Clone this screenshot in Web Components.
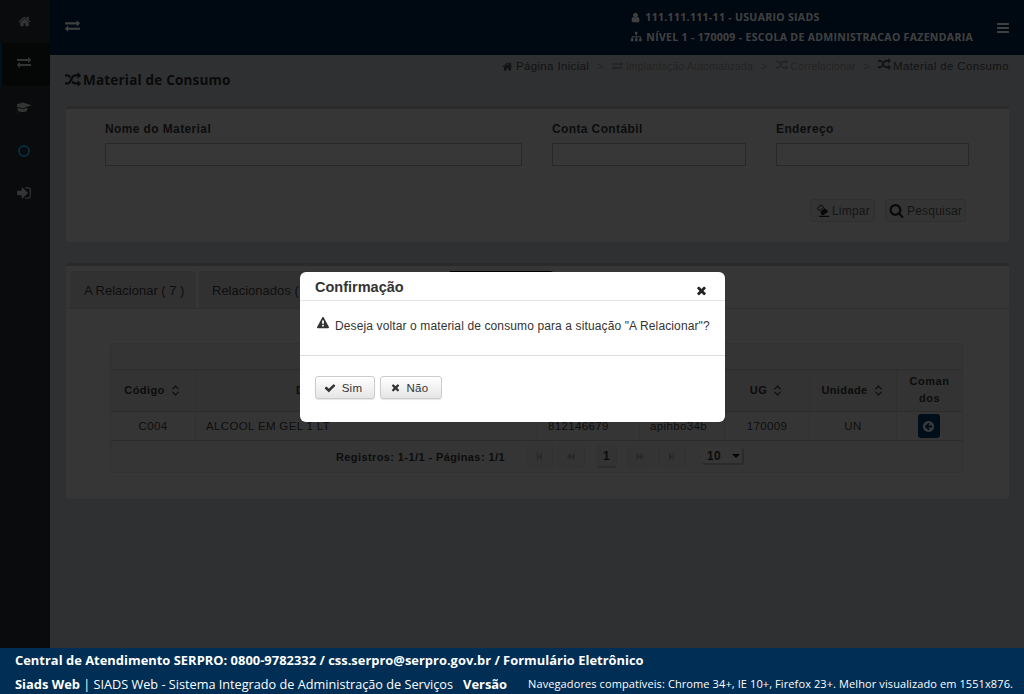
<!DOCTYPE html>
<html lang="pt-BR">
<head>
<meta charset="utf-8">
<title>Material de Consumo</title>
<style>
  html, body { margin: 0; height: 100%; overflow: hidden; }
  body { font-family: "Liberation Sans", Arial, sans-serif; background: #bcc0c4; }
  siads-app { height: 694px; }
</style>
</head>
<body>
<siads-app>
  <side-menu slot="side"></side-menu>
  <top-bar slot="top"></top-bar>
  <main-page slot="main"></main-page>
  <confirm-dialog slot="modal" heading="Confirmação">Deseja voltar o material de consumo para a situação "A Relacionar"?</confirm-dialog>
  <page-footer slot="footer"></page-footer>
</siads-app>

<script>
const ICONS = {
  home: "M1472 992v480q0 26-19 45t-45 19h-384v-384h-256v384h-384q-26 0-45-19t-19-45v-480q0-1 .5-3t.5-3l575-474 575 474q1 2 1 6zm223-69l-62 74q-8 9-21 11h-3q-13 0-21-7l-692-577-692 577q-12 8-24 7-13-2-21-11l-62-74q-8-10-7-23.5t11-21.5l719-599q32-26 76-26t76 26l244 204v-195q0-14 9-23t23-9h192q14 0 23 9t9 23v408l219 182q10 8 11 21.5t-7 23.5z",
  exchange: "M1792 1184v192q0 13-9.5 22.5t-22.5 9.5h-1376v192q0 13-9.5 22.5t-22.5 9.5q-12 0-24-10l-319-320q-9-9-9-22 0-14 9-23l320-320q9-9 23-9 13 0 22.5 9.5t9.5 22.5v192h1376q13 0 22.5 9.5t9.5 22.5zm0-544q0 14-9 23l-320 320q-9 9-23 9-13 0-22.5-9.5t-9.5-22.5v-192h-1376q-13 0-22.5-9.5t-9.5-22.5v-192q0-13 9.5-22.5t22.5-9.5h1376v-192q0-14 9-23t23-9q12 0 24 10l319 319q9 9 9 23z",
  random: "M666 481q-60 92-137 273-22-45-37-72.5t-40.5-63.5-51-56.5-63-35-81.5-14.5h-224q-14 0-23-9t-9-23v-192q0-14 9-23t23-9h224q250 0 410 225zm1126 799q0 14-9 23l-320 320q-9 9-23 9-13 0-22.5-9.5t-9.5-22.5v-192q-32 0-85 .5t-81 1-73-1-71-5-64-10.5-63-18.5-58-28.5-59-40-55-53.5-56-69.5q59-93 136-273 22 45 37 72.5t40.5 63.5 51 56.5 63 35 81.5 14.5h256v-192q0-14 9-23t23-9q12 0 24 10l319 319q9 9 9 23zm0-896q0 14-9 23l-320 320q-9 9-23 9-13 0-22.5-9.5t-9.5-22.5v-192h-256q-48 0-87 15t-69 45-51 61.5-45 77.5q-32 62-78 171-29 66-49.5 111t-54 105-64 100-74 83-90 68.5-106.5 42-128 16.5h-224q-14 0-23-9t-9-23v-192q0-14 9-23t23-9h224q48 0 87-15t69-45 51-61.5 45-77.5q32-62 78-171 29-66 49.5-111t54-105 64-100 74-83 90-68.5 106.5-42 128-16.5h256v-192q0-14 9-23t23-9q12 0 24 10l319 319q9 9 9 23z",
  user: "M1536 1399q0 109-62.5 187t-150.5 78h-854q-88 0-150.5-78t-62.5-187q0-85 8.5-160.5t31.5-152 58.5-131 94-89 134.5-34.5q131 128 313 128t313-128q76 0 134.5 34.5t94 89 58.5 131 31.5 152 8.5 160.5zm-256-887q0 159-112.5 271.5t-271.5 112.5-271.5-112.5-112.5-271.5 112.5-271.5 271.5-112.5 271.5 112.5 112.5 271.5z",
  sitemap: "M700 128h392v420h-126v250h570q40 0 68 28t28 68v220h120v400h-392v-400h124v-170h-474v170h124v400h-392v-400h124v-170h-474v170h124v400h-392v-400h120v-220q0-40 28-68t68-28h570v-250h-126z",
  bars: "M1664 1344v128q0 26-19 45t-45 19h-1408q-26 0-45-19t-19-45v-128q0-26 19-45t45-19h1408q26 0 45 19t19 45zm0-512v128q0 26-19 45t-45 19h-1408q-26 0-45-19t-19-45v-128q0-26 19-45t45-19h1408q26 0 45 19t19 45zm0-512v128q0 26-19 45t-45 19h-1408q-26 0-45-19t-19-45v-128q0-26 19-45t45-19h1408q26 0 45 19t19 45z",
  cap: "M1386 922l18 316q4 69-82 128t-235 93.5-323 34.5-323-34.5-235-93.5-82-128l18-316 574 181q22 7 48 7t48-7zm534-322q0 23-22 31l-1120 352q-4 1-10 1t-10-1l-652-206q-43 34-71 111.5t-34 178.5q63 36 63 109 0 69-58 107l58 433q2 14-8 25-9 11-24 11h-192q-15 0-24-11-10-11-8-25l58-433q-58-38-58-107 0-73 65-111 11-207 98-330l-333-104q-22-8-22-31t22-31l1120-352q4-1 10-1t10 1l1120 352q22 8 22 31z",
  signin: "M1312 896q0 26-19 45l-544 544q-19 19-45 19t-45-19-19-45v-288h-448q-26 0-45-19t-19-45v-384q0-26 19-45t45-19h448v-288q0-26 19-45t45-19 45 19l544 544q19 19 19 45zm352-352v704q0 119-84.5 203.5t-203.5 84.5h-320q-13 0-22.5-9.5t-9.5-22.5q0-4-1-20t-.5-26.5 3-23.5 10-19.5 20.5-6.5h320q66 0 113-47t47-113v-704q0-66-47-113t-113-47h-312q-13 0-22.5-9.5t-9.5-22.5q0-4-1-20t-.5-26.5 3-23.5 10-19.5 20.5-6.5h320q119 0 203.5 84.5t84.5 203.5z",
  times: "M1490 1322q0 40-28 68l-136 136q-28 28-68 28t-68-28l-294-294-294 294q-28 28-68 28t-68-28l-136-136q-28-28-28-68t28-68l294-294-294-294q-28-28-28-68t28-68l136-136q28-28 68-28t68 28l294 294 294-294q28-28 68-28t68 28l136 136q28 28 28 68t-28 68l-294 294 294 294q28 28 28 68z",
  check: "M1671 566q0 40-28 68l-724 724-136 136q-28 28-68 28t-68-28l-136-136-362-362q-28-28-28-68t28-68l136-136q28-28 68-28t68 28l294 295 656-657q28-28 68-28t68 28l136 136q28 28 28 68z",
  warning: "M1024 1375v-190q0-14-9.5-23.5t-22.5-9.5h-192q-13 0-22.5 9.5t-9.5 23.5v190q0 14 9.5 23.5t22.5 9.5h192q13 0 22.5-9.5t9.5-23.5zm-2-374l18-459q0-12-10-19-13-11-24-11h-220q-11 0-24 11-10 7-10 21l17 457q0 10 10 16.5t24 6.5h185q14 0 23.5-6.5t10.5-16.5zm-14-934l768 1408q35 63-2 126-17 29-46.5 46t-63.5 17h-1536q-34 0-63.5-17t-46.5-46q-37-63-2-126l768-1408q17-31 47-49t65-18 65 18 47 49z",
  search: "M1216 832q0-185-131.5-316.5t-316.5-131.5-316.5 131.5-131.5 316.5 131.5 316.5 316.5 131.5 316.5-131.5 131.5-316.5zm512 832q0 52-38 90t-90 38q-54 0-90-38l-343-342q-179 124-399 124-143 0-273.5-55.5t-225-150-150-225-55.5-273.5 55.5-273.5 150-225 225-150 273.5-55.5 273.5 55.5 225 150 150 225 55.5 273.5q0 220-124 399l343 343q37 37 37 90z",
  eraser: "M700 150L1100 550L600 1000L200 650ZM690 300L330 650L600 880L970 550ZM1150 600L1600 1000L1050 1420H760L660 1060ZM500 1530H1700V1670H500Z",
  sort: "M896 180L1420 730L1220 730L896 400L572 730L372 730ZM896 1612L1420 1062L1220 1062L896 1392L572 1062L372 1062Z",
  first: "M1363 141q19-19 32-13t13 32v1472q0 26-13 32t-32-13l-710-710q-9-9-13-19v678q0 26-19 45t-45 19h-128q-26 0-45-19t-19-45v-1408q0-26 19-45t45-19h128q26 0 45 19t19 45v678q4-10 13-19z",
  prev: "M1683 141q19-19 32-13t13 32v1472q0 26-13 32t-32-13l-710-710q-9-9-13-19v710q0 26-13 32t-32-13l-710-710q-19-19-19-45t19-45l710-710q19-19 32-13t13 32v710q4-10 13-19z",
  next: "M109 1651q-19 19-32 13t-13-32v-1472q0-26 13-32t32 13l710 710q9 9 13 19v-710q0-26 13-32t32 13l710 710q19 19 19 45t-19 45l-710 710q-19 19-32 13t-13-32v-710q-4 10-13 19z",
  last: "M429 1651q-19 19-32 13t-13-32v-1472q0-26 13-32t32 13l710 710q9 9 13 19v-678q0-26 19-45t45-19h128q26 0 45 19t19 45v1408q0 26-19 45t-45 19h-128q-26 0-45-19t-19-45v-678q-4 10-13 19z",
  back: "M1408 960v-128q0-26-19-45t-45-19h-502l189-189q19-19 19-45t-19-45l-91-91q-18-18-45-18t-45 18l-362 362-91 91q-18 18-18 45t18 45l91 91 362 362q18 18 45 18t45-18l91-91q18-18 18-45t-18-45l-189-189h502q26 0 45-19t19-45zm256-64q0 209-103 385.5t-279.5 279.5-385.5 103-385.5-103-279.5-279.5-103-385.5 103-385.5 279.5-279.5 385.5-103 385.5 103 279.5 279.5 103 385.5z"
};

class FaIcon extends HTMLElement {
  connectedCallback() {
    const size = this.getAttribute("size") || 14;
    const vb = this.getAttribute("name") === "cap" ? "0 0 2048 1792" : "0 0 1792 1792";
    this.attachShadow({ mode: "open" }).innerHTML = `
      <style>
        :host { display: inline-flex; flex: none; line-height: 0; }
        svg { fill: currentColor; }
      </style>
      <svg width="${size}" height="${size}" viewBox="${vb}"><path d="${ICONS[this.getAttribute("name")]}"/></svg>`;
  }
}
customElements.define("fa-icon", FaIcon);

class SiadsApp extends HTMLElement {
  constructor() {
    super();
    this.attachShadow({ mode: "open" }).innerHTML = `
      <style>
        :host { display: grid; grid-template-rows: 648px 46px; position: relative; }
        .top { display: grid; grid-template-columns: 50px 1fr; min-height: 0; position: relative; }
        .content { display: grid; grid-template-rows: 55px 1fr; min-height: 0; }
        .dim { position: absolute; inset: 0; background: rgba(0,0,0,.75); }
        .foot { position: relative; z-index: 2; }
      </style>
      <div class="top">
        <slot name="side"></slot>
        <div class="content">
          <slot name="top"></slot>
          <slot name="main"></slot>
        </div>
        <div class="dim"></div>
      </div>
      <div class="foot"><slot name="footer"></slot></div>
      <slot name="modal"></slot>`;
  }
}
customElements.define("siads-app", SiadsApp);

class SideMenu extends HTMLElement {
  constructor() {
    super();
    const items = [["home", 13], ["exchange", 14, true], ["cap", 15], ["ring"], ["signin", 16]];
    this.attachShadow({ mode: "open" }).innerHTML = `
      <style>
        :host { display: block; background: #282c30; }
        .item { height: 43px; display: flex; align-items: center; justify-content: center; color: #cfcfcf; box-sizing: border-box; padding-right: 2px; }
        .item:last-child { padding-bottom: 2px; }
        .item.on { background: #15181b; border-left: 2px solid #00457a; padding: 0 4px 6px 0; }
        .ring { width: 8px; height: 8px; border: 2px solid #16aaf0; border-radius: 50%; }
      </style>
      ${items.map(([n, s, on]) => `<div class="item${on ? " on" : ""}">${n === "ring" ? '<span class="ring"></span>' : `<fa-icon name="${n}" size="${s}"></fa-icon>`}</div>`).join("")}`;
  }
}
customElements.define("side-menu", SideMenu);

class TopBar extends HTMLElement {
  constructor() {
    super();
    this.attachShadow({ mode: "open" }).innerHTML = `
      <style>
        :host { display: flex; align-items: center; background: #002044; color: #fff; padding: 0 14px 0 15px; font: 700 10.5px "Open Sans", sans-serif; }
        .toggle { margin: -5px auto 0 0; }
        .info { display: grid; gap: 6px; margin-right: 23px; margin-top: -1px; }
        .row { display: flex; align-items: center; gap: 4px; height: 14px; white-space: nowrap; letter-spacing: .32px; }
      </style>
      <fa-icon class="toggle" name="exchange" size="15"></fa-icon>
      <div class="info">
        <div class="row"><fa-icon name="user" size="11"></fa-icon>111.111.111-11 - USUARIO SIADS</div>
        <div class="row"><fa-icon name="sitemap" size="12"></fa-icon>NÍVEL 1 - 170009 - ESCOLA DE ADMINISTRACAO FAZENDARIA</div>
      </div>
      <fa-icon name="bars" size="14"></fa-icon>`;
  }
}
customElements.define("top-bar", TopBar);

class MainPage extends HTMLElement {
  constructor() {
    super();
    this.attachShadow({ mode: "open" }).innerHTML = `
      <style>
        :host { display: block; background: #bcc0c4; padding: 4px 15px 0; color: #111; min-height: 0; }
        .crumbs { display: flex; justify-content: flex-end; align-items: center; height: 14px; font-size: 11.5px; letter-spacing: .35px; white-space: nowrap; color: #4a4a4a; }
        .crumbs > * { display: inline-flex; align-items: center; }
        .crumbs .sep { margin: 0 8px; color: #8d8d8d; font-size: 10.5px; }
        .crumbs .off { color: #8d8d8d; font-size: 10.5px; letter-spacing: .15px; }
        .crumbs fa-icon { margin-right: 3px; }
        .crumbs .off fa-icon { margin: -2px 3px 0 0; }
        .crumbs .cur fa-icon { margin: -3px 2px 0 0; }
        h1 { margin: 0 0 19px; height: 14px; display: flex; align-items: center; gap: 2px; font: 700 13.5px "Open Sans", sans-serif; color: #2a2a2a; letter-spacing: .2px; }
        section { margin: 0 0 0 1px; background: #d8d8d8; border-top: 3px solid #a8a8a8; border-radius: 3px; box-sizing: border-box; }
        .search { height: 136px; padding: 13px 40px 0 39px; }
        .fields { display: grid; grid-template-columns: 417px 194px 193px; column-gap: 30px; }
        label { display: block; font-weight: 700; font-size: 12px; letter-spacing: .38px; color: #333; margin-bottom: 7px; line-height: 14px; }
        .box { height: 21px; border: 1px solid #a0a0a0; background: #dadada; }
        .actions { display: flex; justify-content: flex-end; gap: 10px; margin: 21px -25px 0; padding: 11px 28px 0 0; border-top: 1px solid #d0d0d0; }
        .btn { height: 23px; box-sizing: border-box; display: inline-flex; align-items: center; border: 1px solid #c0c0c0; border-radius: 3px; background: #cfcfcf; font-size: 12px; color: #555; letter-spacing: .2px; }
        .btn fa-icon { color: #222; }
        .clear { width: 65px; padding-left: 4px; gap: 2px; }
        .find { width: 81px; padding-left: 3px; gap: 3px; }
        .results { margin-top: 21px; height: 236px; padding: 5px 4px 0; }
        .tabs { display: flex; gap: 3px; height: 37px; border-bottom: 1px solid #bdbdbd; margin: 0 -4px; padding: 0 4px; }
        .tab { height: 37px; box-sizing: border-box; display: flex; align-items: center; padding: 2px 0 0 14px; background: #c4c4c4; border-radius: 4px 4px 0 0; font-size: 13px; color: #3a3a3a; white-space: nowrap; }
        .tab.one { width: 126px; }
        .tab.two { width: 112px; padding-left: 13px; }
        .tab.active { margin-left: 134px; width: 106px; background: #d8d8d8; border-top: 1px solid #000; }
      </style>
      <div class="crumbs">
        <span><fa-icon name="home" size="11"></fa-icon>Página Inicial</span><span class="sep">&gt;</span>
        <span class="off"><fa-icon name="exchange" size="11"></fa-icon>Implantação Automatizada</span><span class="sep">&gt;</span>
        <span class="off"><fa-icon name="random" size="12"></fa-icon>Correlacionar</span><span class="sep">&gt;</span>
        <span class="cur"><fa-icon name="random" size="13"></fa-icon>Material de Consumo</span>
      </div>
      <h1><fa-icon name="random" size="16"></fa-icon>Material de Consumo</h1>
      <section class="search">
        <div class="fields">
          <div><label>Nome do Material</label><div class="box"></div></div>
          <div><label>Conta Contábil</label><div class="box"></div></div>
          <div><label>Endereço</label><div class="box"></div></div>
        </div>
        <div class="actions">
          <span class="btn clear"><fa-icon name="eraser" size="15"></fa-icon>Limpar</span>
          <span class="btn find"><fa-icon name="search" size="15"></fa-icon>Pesquisar</span>
        </div>
      </section>
      <section class="results">
        <div class="tabs">
          <div class="tab one">A Relacionar ( 7 )</div>
          <div class="tab two">Relacionados (</div>
          <div class="tab active"></div>
        </div>
        <material-table></material-table>
      </section>`;
  }
}
customElements.define("main-page", MainPage);

class MaterialTable extends HTMLElement {
  constructor() {
    super();
    const sort = '<fa-icon name="sort" size="13"></fa-icon>';
    const pg = (n) => `<span class="pg"><fa-icon name="${n}" size="9"></fa-icon></span>`;
    this.attachShadow({ mode: "open" }).innerHTML = `
      <style>
        :host { display: block; margin: 34px 42px 0 40px; font-size: 11.5px; color: #3a3a3a; }
        .grid { display: grid; grid-template-columns: 84px 342px 102px 85px 85px 87px 66px; grid-template-rows: 25px 42px 29px 32px; border: 1px solid #c4c4c4; border-radius: 3px; background: #d4d4d4; }
        .grid > div { display: flex; align-items: center; justify-content: center; box-sizing: border-box; border-left: 1px solid #c0c0c0; border-top: 1px solid #b0b0b0; letter-spacing: .35px; }
        .grid > div.first { border-left: 0; }
        .caption { grid-column: 1 / -1; border: 0 !important; background: #cfcfcf; }
        .grid > .th { background: #c9c9c9; font-weight: 700; font-size: 11px; color: #333; gap: 4px; text-align: center; line-height: 17px; letter-spacing: .4px; }
        .left { justify-content: flex-start !important; padding-left: 10px; }
        .th.left { padding-left: 100px; }
        .grid > .cmds { letter-spacing: .55px; padding-bottom: 2px; }
        .cmdcell { padding-right: 2px; }
        .cmd { background: #003a6a; color: #dfe6ee; width: 22px; height: 24px; border-radius: 3px; display: flex; align-items: center; justify-content: center; }
        .pager { grid-column: 1 / -1; border-left: 0 !important; justify-content: flex-start !important; padding-left: 225px; gap: 3px; font-weight: 700; font-size: 11px; color: #333; }
        .pager b { margin-right: 18px; white-space: nowrap; letter-spacing: .4px; }
        .pg { width: 28px; height: 23px; box-sizing: border-box; border: 1px solid #c6c6c6; border-radius: 3px; display: flex; align-items: center; justify-content: center; color: #a0a0a0; background: #d0d0d0; }
        .pg.cur { width: 21px; margin: 0 7px 0 8px; background: #cccccc; color: #333; border-bottom: 2px solid #aaa; font-size: 12px; }
        .sel { margin-left: 13px; width: 42px; height: 17px; box-sizing: border-box; display: flex; align-items: center; justify-content: space-between; padding: 0 2px 0 5px; background: #d8d8d8; border-radius: 3px; font-size: 12px; color: #333; border-right: 2px solid #aaa; border-bottom: 2px solid #aaa; }
        .sel i { width: 0; height: 0; border: 4px solid transparent; border-top: 4px solid #111; border-bottom: 0; }
      </style>
      <div class="grid">
        <div class="caption"></div>
        <div class="th first">Código ${sort}</div>
        <div class="th left">D</div>
        <div class="th"></div>
        <div class="th"></div>
        <div class="th">UG ${sort}</div>
        <div class="th">Unidade ${sort}</div>
        <div class="th cmds">Coman<br>dos</div>
        <div class="first">C004</div>
        <div class="left">ALCOOL EM GEL 1 LT</div>
        <div class="left">812146679</div>
        <div class="left">apihbo34b</div>
        <div>170009</div>
        <div>UN</div>
        <div class="cmdcell"><span class="cmd"><fa-icon name="back" size="13"></fa-icon></span></div>
        <div class="pager"><b>Registros: 1-1/1 - Páginas: 1/1</b>${pg("first")}${pg("prev")}<span class="pg cur">1</span>${pg("next")}${pg("last")}<span class="sel">10<i></i></span></div>
      </div>`;
  }
}
customElements.define("material-table", MaterialTable);

class ConfirmDialog extends HTMLElement {
  constructor() {
    super();
    this.attachShadow({ mode: "open" }).innerHTML = `
      <style>
        :host { position: absolute; left: 300px; top: 272px; width: 425px; height: 150px; z-index: 3; display: block; background: #fff; border-radius: 6px; color: #333; }
        header { height: 28px; border-bottom: 1px solid #e5e5e5; display: flex; justify-content: space-between; padding: 0 17px 0 15px; }
        h2 { margin: 0; font-size: 14.5px; line-height: 30px; color: #333; }
        .x { color: #222; margin-top: 12px; }
        .body { height: 55px; border-bottom: 1px solid #ddd; box-sizing: border-box; padding: 18px 15px 0 17px; display: flex; gap: 6px; font-size: 12px; white-space: nowrap; letter-spacing: .12px; align-items: flex-start; line-height: 14px; }
        .body fa-icon { margin-top: -2px; }
        footer { display: flex; gap: 5px; padding: 20px 15px 0; }
        button { height: 23px; box-sizing: border-box; display: inline-flex; align-items: center; padding: 0 4px 0 0; justify-content: center; gap: 6px; border: 1px solid #ccc; border-radius: 3px; background: linear-gradient(#fff, #e6e6e6); font: 11.5px "Liberation Sans", sans-serif; color: #333; letter-spacing: .3px; box-shadow: 0 1px 1px rgba(0,0,0,.1); }
        .yes { width: 60px; }
        .no { width: 62px; }
      </style>
      <header><h2>${this.getAttribute("heading")}</h2><fa-icon class="x" name="times" size="13"></fa-icon></header>
      <div class="body"><fa-icon name="warning" size="12"></fa-icon><span><slot></slot></span></div>
      <footer>
        <button class="yes"><fa-icon name="check" size="12"></fa-icon>Sim</button>
        <button class="no"><fa-icon name="times" size="11"></fa-icon>Não</button>
      </footer>`;
  }
}
customElements.define("confirm-dialog", ConfirmDialog);

class PageFooter extends HTMLElement {
  constructor() {
    super();
    this.attachShadow({ mode: "open" }).innerHTML = `
      <style>
        :host { display: block; height: 46px; box-sizing: border-box; background: #002e55; color: #fff; font: 12.9px "Open Sans", sans-serif; padding: 2px 0 0 15px; white-space: nowrap; overflow: hidden; }
        .one { font-weight: 700; line-height: 20px; letter-spacing: .02px; }
        .two { display: flex; align-items: center; margin-top: 4px; line-height: 20px; font-size: 12.7px; }
        b { font-weight: 700; font-size: 12.9px; }
        .ver { margin: 0 21px 0 10px; }
        .compat { font-size: 11px; letter-spacing: .1px; }
      </style>
      <div class="one">Central de Atendimento SERPRO: 0800-9782332 / css.serpro@serpro.gov.br / Formulário Eletrônico</div>
      <div class="two"><b>Siads Web</b>&nbsp;| SIADS Web - Sistema Integrado de Administração de Serviços<b class="ver">Versão</b><span class="compat">Navegadores compatíveis: Chrome 34+, IE 10+, Firefox 23+. Melhor visualizado em 1551x876.</span></div>`;
  }
}
customElements.define("page-footer", PageFooter);
</script>
</body>
</html>
